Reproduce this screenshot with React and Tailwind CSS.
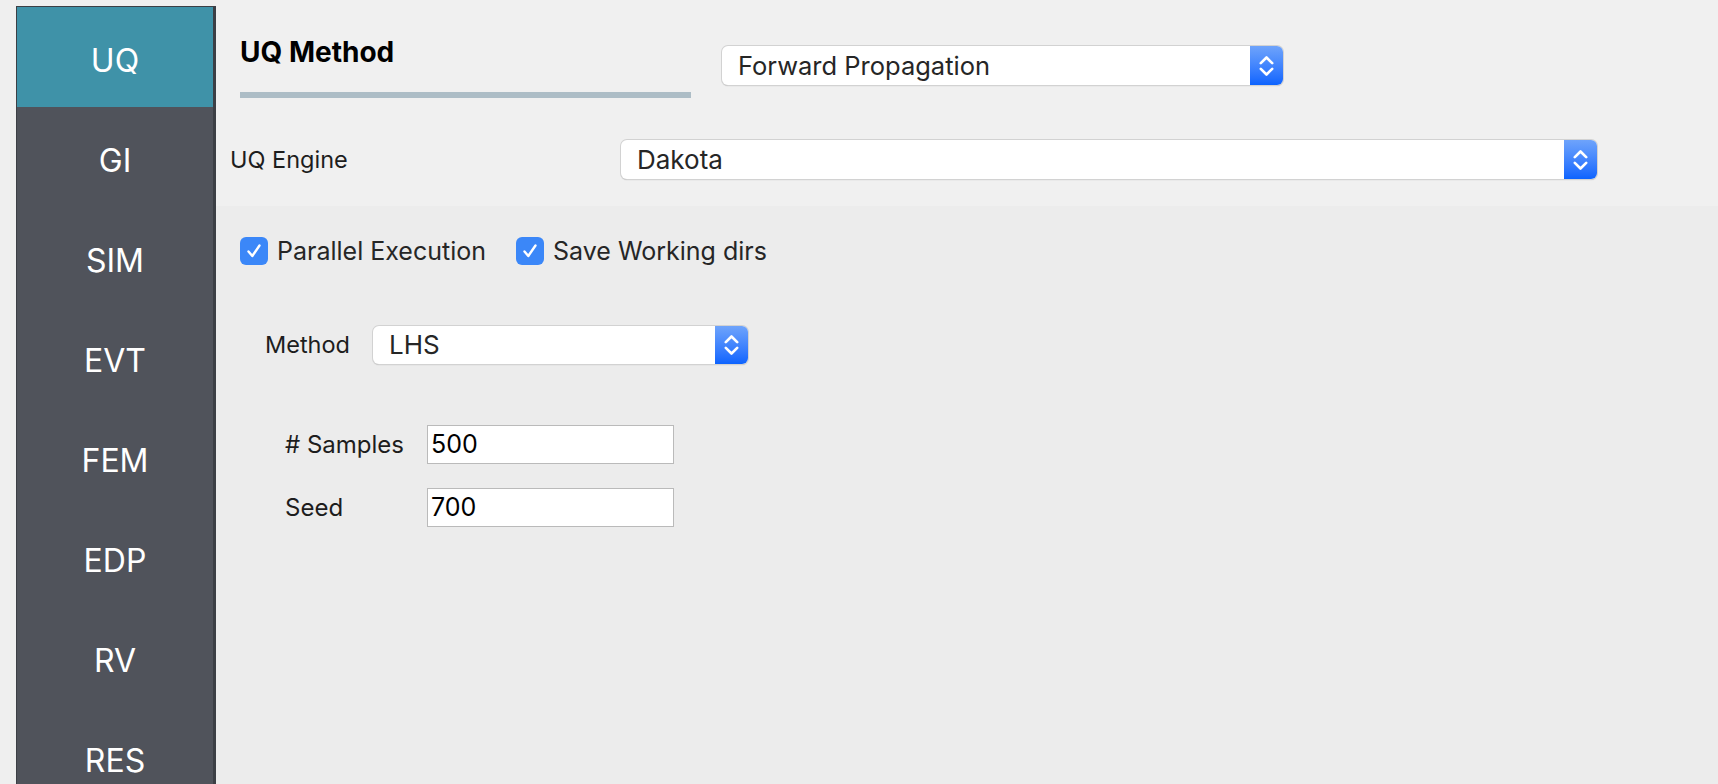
import React from "react";

const tabs = ["UQ", "GI", "SIM", "EVT", "FEM", "EDP", "RV", "RES"];

function Stepper() {
  return (
    <div className="flex h-full w-[33px] shrink-0 items-center justify-center rounded-r-[6px] bg-gradient-to-b from-[#6ea3fb] to-[#0b63fe]">
      <svg width="15" height="22" viewBox="0 0 15 22" fill="none">
        <path d="M1.8 8.2 L7.5 2.5 L13.2 8.2" stroke="white" strokeWidth="2.6" strokeLinecap="round" strokeLinejoin="round" />
        <path d="M1.8 13.8 L7.5 19.5 L13.2 13.8" stroke="white" strokeWidth="2.6" strokeLinecap="round" strokeLinejoin="round" />
      </svg>
    </div>
  );
}

function Combo({ value, className, size }) {
  return (
    <div
      className={
        "flex shrink-0 items-stretch rounded-[6px] bg-white shadow-[0_0_0_1px_#d2d2d2,0_1px_1px_#a9a9a9] " +
        className
      }
    >
      <div className={"flex flex-1 items-center pl-4 leading-none text-[#262626] " + (size || "text-[26px]")}>
        {value}
      </div>
      <Stepper />
    </div>
  );
}

function Check({ label, className }) {
  return (
    <div className={"flex h-[28px] items-center gap-[9px] " + (className || "")}>
      <div className="flex h-[28px] w-[28px] shrink-0 items-center justify-center rounded-[6px] bg-[#3b87f8]">
        <svg width="18" height="18" viewBox="0 0 18 18" fill="none">
          <path d="M3.5 9.5 L7.3 14 L14.5 3.5" stroke="white" strokeWidth="2.4" strokeLinecap="round" strokeLinejoin="round" />
        </svg>
      </div>
      <span className="text-[25px] leading-none text-[#262626]">{label}</span>
    </div>
  );
}

function Field({ label, value }) {
  return (
    <div className="flex h-[39px] items-center">
      <span className="w-[142px] shrink-0 text-[24px] leading-none text-[#1d1d1d]">{label}</span>
      <div className="flex h-[39px] w-[247px] items-center border border-[#bababa] bg-white pl-[3px] text-[25px] leading-none text-black">
        {value}
      </div>
    </div>
  );
}

export default function App() {
  return (
    <div className="flex h-[784px] w-[1718px] overflow-hidden bg-[#efefef] font-['Inter',sans-serif]">
      <div className="w-4 shrink-0" />

      {/* side tabs */}
      <nav className="mt-[6px] flex w-[200px] shrink-0 flex-col border-l border-t border-r-[3px] border-[#3c3f45] bg-[#50535b]">
        {tabs.map((t, i) => (
          <div
            key={t}
            className={
              "flex h-[100px] shrink-0 items-center justify-center pt-[7px] text-[32px] leading-none text-white " +
              (i === 0 ? "bg-[#3f92a8]" : "")
            }
          >
            {t}
          </div>
        ))}
      </nav>

      <main className="flex flex-1 flex-col">
        {/* header panel */}
        <section className="flex h-[206px] shrink-0 flex-col bg-[#f0f0f0]">
          <div className="flex">
            <div className="ml-6 w-[451px] shrink-0">
              <div className="mt-[32px] text-[28px] font-bold leading-[40px] text-black">UQ Method</div>
              <div className="mt-[20px] h-[6px] bg-[#adbdc6]" />
            </div>
            <Combo
              value="Forward Propagation"
              size="text-[25.5px]"
              className="ml-[31px] mt-[46px] h-[39px] w-[561px]"
            />
          </div>
          <div className="mt-[42px] flex h-[39px] items-center">
            <span className="w-[405px] shrink-0 pl-[14px] text-[23.5px] leading-none text-[#1d1d1d]">UQ Engine</span>
            <Combo value="Dakota" className="h-[39px] w-[976px]" />
          </div>
        </section>

        {/* method body */}
        <section className="flex flex-1 flex-col bg-[#ececec] pt-[31px]">
          <div className="flex pl-6">
            <Check label="Parallel Execution" className="w-[276px]" />
            <Check label="Save Working dirs" />
          </div>

          <div className="mt-[61px] flex h-[38px] items-center">
            <span className="w-[157px] shrink-0 pl-[49px] text-[23.5px] leading-none text-[#1d1d1d]">Method</span>
            <Combo value="LHS" className="h-[38px] w-[375px]" />
          </div>

          <div className="mt-[61px] flex flex-col gap-[24px] pl-[69px]">
            <Field label="# Samples" value="500" />
            <Field label="Seed" value="700" />
          </div>
        </section>
      </main>
    </div>
  );
}
